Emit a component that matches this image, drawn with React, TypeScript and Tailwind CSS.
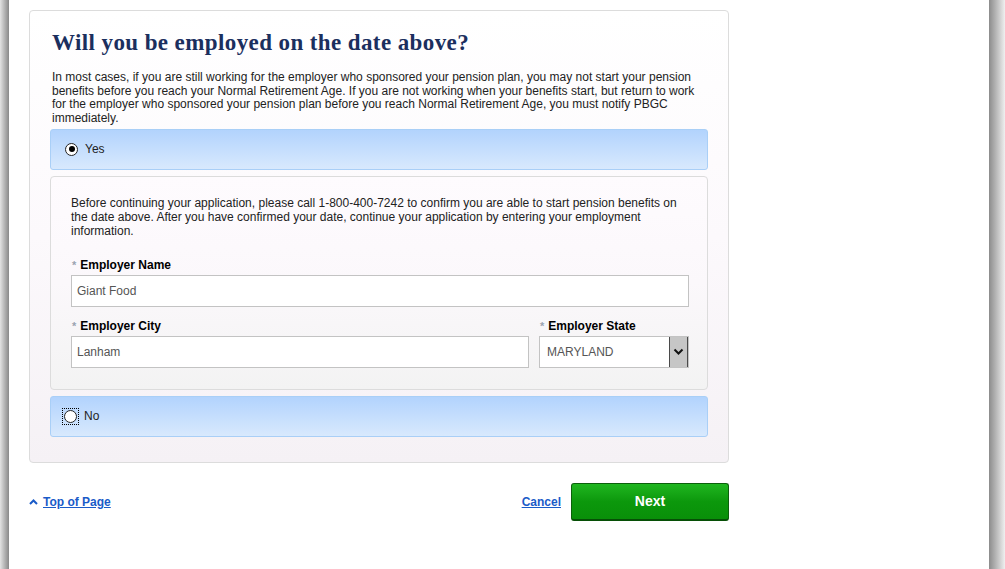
import React from "react";

function Radio({ checked, focused }: { checked?: boolean; focused?: boolean }) {
    return (
        <span className={focused ? "flex items-center justify-center w-[15px] h-[15px] outline-1 outline-dotted outline-black" : "flex items-center justify-center w-[15px] h-[15px]"}>
            <span className="flex items-center justify-center w-[13px] h-[13px] rounded-full border-[1.5px] border-[#222] bg-white">
                {checked && <span className="w-[6px] h-[6px] rounded-full bg-black" />}
            </span>
        </span>
    );
}

function Label({ text }: { text: string }) {
    return (
        <div className="flex items-center h-[14px] text-[12px] font-bold text-black">
            <span className="text-[#9aa3b0] text-[11px] mr-[4px] ml-[1px]">*</span>
            {text}
        </div>
    );
}

export default function App() {
    return (
        <div className="flex w-full h-[569px] bg-white overflow-hidden" style={{ fontFamily: '"Liberation Sans", Arial, sans-serif' }}>
            <div className="w-[9px] shrink-0 bg-gradient-to-r from-[#e4e4e4] to-[#8a8a8a]" />
            <div className="flex-1 pl-[20px] pt-[10px]">
                <div className="w-[700px] rounded-[4px] border border-[#dcdcdc] bg-gradient-to-b from-white via-[#fcf9fc] to-[#f5f1f5] px-[20px] pt-[19px] pb-[25px]">
                    <h1 className="ml-[2px] text-[23px] leading-[26px] font-bold tracking-[0.4px] text-[#1b2f5e]" style={{ fontFamily: '"Liberation Serif", Georgia, serif' }}>
                        Will you be employed on the date above?
                    </h1>
                    <p className="ml-[2px] mt-[15px] text-[12px] leading-[13.7px] text-[#222]">
                        In most cases, if you are still working for the employer who sponsored your pension plan, you may not start your pension benefits before you reach your Normal Retirement Age. If you are not working when your benefits start, but return to work for the employer who sponsored your pension plan before you reach Normal Retirement Age, you must notify PBGC immediately.
                    </p>

                    <div className="mt-[3px] h-[41px] flex items-center gap-[6px] pl-[13px] rounded-[3px] border border-[#a9cff7] bg-gradient-to-b from-[#b2d3fd] to-[#d8e9fd] text-[12px] text-[#222]">
                        <Radio checked />
                        <span>Yes</span>
                    </div>

                    <div className="mt-[6px] rounded-[4px] border border-[#dcdcdc] bg-gradient-to-b from-[#fefbfe] via-[#fbf8fb] to-[#f3f3f3] pl-[20px] pr-[18px] pt-[19px] pb-[21px]">
                        <p className="text-[12px] leading-[14px] text-[#222]">
                            Before continuing your application, please call 1-800-400-7242 to confirm you are able to start pension benefits on the date above. After you have confirmed your date, continue your application by entering your employment information.
                        </p>
                        <div className="mt-[20px]">
                            <Label text="Employer Name" />
                            <div className="mt-[3px] h-[32px] flex items-center px-[5px] border border-[#c3c3c3] bg-white text-[12px] text-[#555]">
                                Giant Food
                            </div>
                        </div>
                        <div className="mt-[12px] flex gap-[10px]">
                            <div className="flex-1">
                                <Label text="Employer City" />
                                <div className="mt-[3px] h-[32px] flex items-center px-[5px] border border-[#c3c3c3] bg-white text-[12px] text-[#555]">
                                    Lanham
                                </div>
                            </div>
                            <div className="w-[150px]">
                                <Label text="Employer State" />
                                <div className="mt-[3px] h-[32px] flex items-center border border-[#c3c3c3] bg-white text-[12px] text-[#555]">
                                    <span className="flex-1 pl-[7px]">MARYLAND</span>
                                    <span className="w-[19px] h-full flex items-center justify-center bg-[#c6c6c6] border-x border-[#4a4a4a]">
                                        <svg width="11" height="8" viewBox="0 0 11 8">
                                            <polyline points="1.5,1.5 5.5,5.5 9.5,1.5" fill="none" stroke="#111" strokeWidth="2" />
                                        </svg>
                                    </span>
                                </div>
                            </div>
                        </div>
                    </div>

                    <div className="mt-[6px] h-[41px] flex items-center gap-[6px] pl-[12px] rounded-[3px] border border-[#a9cff7] bg-gradient-to-b from-[#b2d3fd] to-[#d8e9fd] text-[12px] text-[#222]">
                        <Radio focused />
                        <span>No</span>
                    </div>
                </div>

                <div className="w-[700px] mt-[20px] flex items-center">
                    <a href="#" className="flex items-center gap-[5px] text-[12px] font-bold text-[#1a5bc8] underline">
                        <svg width="9" height="6" viewBox="0 0 9 6">
                            <polyline points="1,5 4.5,1.5 8,5" fill="none" stroke="#1a5bc8" strokeWidth="2" />
                        </svg>
                        Top of Page
                    </a>
                    <a href="#" className="ml-auto mr-[10px] text-[12px] font-bold text-[#1a5bc8] underline">Cancel</a>
                    <button className="w-[158px] h-[38px] rounded-[3px] border border-[#0b600b] border-b-2 border-b-[#064f06] bg-gradient-to-b from-[#1fb61f] via-[#0c980c] to-[#098f09] text-white text-[14px] font-bold">
                        Next
                    </button>
                </div>
            </div>
            <div className="w-[16px] shrink-0 bg-gradient-to-r from-[#8c8c8c] to-[#f0f0f0]" />
        </div>
    );
}
